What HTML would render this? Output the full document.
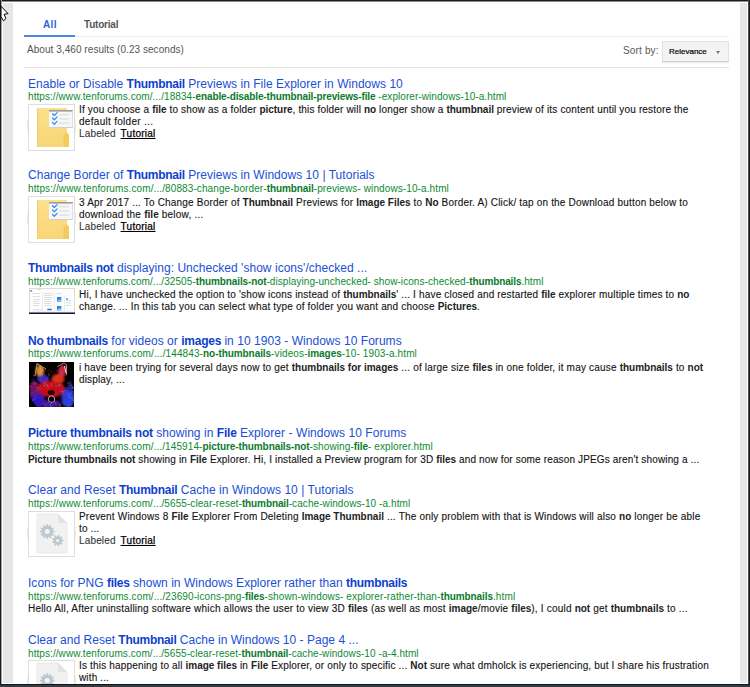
<!DOCTYPE html>
<html><head><meta charset="utf-8"><title>Search results</title><style>
*{margin:0;padding:0;box-sizing:border-box}
html,body{width:750px;height:687px;overflow:hidden;background:#fff}
body{position:relative;font-family:"Liberation Sans",sans-serif}
.frame{position:absolute;left:0;top:0;width:750px;height:687px;pointer-events:none}
.ti,.ur,.sn,.hd{position:absolute;white-space:nowrap;line-height:16px}
.ti{font-size:12px;color:#1a4fd6}
.ti b{color:#0d3fcf}
.ur{font-size:10px;color:#0c8a32}
.ur b{color:#0a7a2c}
.sn{font-size:10px;color:#141414;-webkit-text-stroke-width:0.12px}
.sn b{-webkit-text-stroke-width:0}
.sn b{color:#222}
.lab{color:#383838;letter-spacing:0.15px}
.tut{color:#000;text-decoration:underline;margin-left:2px;letter-spacing:0.25px;-webkit-text-stroke-width:0.25px}
.box{position:absolute;border:1px solid #dedede;background:#fff;overflow:hidden}
.box svg{position:absolute;left:0;top:0}
</style></head>
<body>

<div style="position:absolute;left:24px;top:35px;width:51px;height:2px;background:#4a86e8"></div>
<div style="position:absolute;left:75px;top:36px;width:654px;height:1px;background:#ebebeb"></div>
<div style="position:absolute;left:24px;top:67px;width:705px;height:1px;background:#e5e5e5"></div>
<div style="position:absolute;left:662px;top:41px;width:67px;height:21px;background:#f3f3f3;border:1px solid #e3e3e3;border-bottom-color:#d2d2d2;box-shadow:0 1px 1px rgba(0,0,0,0.08)"></div>
<div style="position:absolute;left:716px;top:51px;width:0;height:0;border-left:2.5px solid transparent;border-right:2.5px solid transparent;border-top:3px solid #777"></div>
<div id='hA' class='hd' style='left:43px;top:17px;font-size:10px;color:#2a66dc;letter-spacing:0.400px'><b>All</b></div><div id='hT' class='hd' style='left:84px;top:17px;font-size:10px;color:#555;letter-spacing:-0.214px'><b>Tutorial</b></div><div id='hR' class='hd' style='left:27px;top:42px;font-size:10px;color:#555;letter-spacing:0.055px'>About 3,460 results (0.23 seconds)</div><div id='hS' class='hd' style='left:623px;top:43px;font-size:10px;color:#5a5a5a;letter-spacing:0.157px'>Sort by:</div><div id='hV' class='hd' style='left:669px;top:44px;font-size:8px;color:#000;-webkit-text-stroke:0.2px #000'>Relevance</div>
<div id='t0' class='ti' style='left:28px;top:76px;letter-spacing:0.030px'>Enable or Disable <b style="letter-spacing:-0.270px">Thumbnail</b> Previews in File Explorer in Windows 10</div><div id='u0' class='ur' style='left:28px;top:89px;letter-spacing:0.069px'>https://www.tenforums.com/.../18834-<b style="letter-spacing:-0.121px">enable-disable-thumbnail-previews-file</b> -explorer-windows-10-a.html</div><div id='s0_0' class='sn' style='left:79px;top:102px;letter-spacing:0.161px'>If you choose a <b style="letter-spacing:-0.029px">file</b> to show as a folder <b style="letter-spacing:-0.029px">picture</b>, this folder will <b style="letter-spacing:-0.029px">no</b> longer show a <b style="letter-spacing:-0.029px">thumbnail</b> preview of its content until you restore the</div><div id='s0_1' class='sn' style='left:79px;top:114px;letter-spacing:0.294px'>default folder ...</div><div class='sn lab' style='left:79px;top:126px'>Labeled <span class='tut'>Tutorial</span></div><div id='t1' class='ti' style='left:28px;top:167px;letter-spacing:0.033px'>Change Border of <b style="letter-spacing:-0.267px">Thumbnail</b> Previews in Windows 10 | Tutorials</div><div id='u1' class='ur' style='left:28px;top:181px;letter-spacing:0.105px'>https://www.tenforums.com/.../80883-change-border-<b style="letter-spacing:-0.085px">thumbnail</b>-previews- windows-10-a.html</div><div id='s1_0' class='sn' style='left:79px;top:195px;letter-spacing:0.183px'>3 Apr 2017 ... To Change Border of <b style="letter-spacing:-0.007px">Thumbnail</b> Previews for <b style="letter-spacing:-0.007px">Image Files</b> to <b style="letter-spacing:-0.007px">No</b> Border. A) Click/ tap on the Download button below to</div><div id='s1_1' class='sn' style='left:79px;top:207px;letter-spacing:0.222px'>download the <b style="letter-spacing:0.032px">file</b> below, ...</div><div class='sn lab' style='left:79px;top:219px'>Labeled <span class='tut'>Tutorial</span></div><div id='t2' class='ti' style='left:28px;top:260px;letter-spacing:0.033px'><b style="letter-spacing:-0.267px">Thumbnails not</b> displaying: Unchecked &#39;show icons&#39;/checked ...</div><div id='u2' class='ur' style='left:28px;top:274px;letter-spacing:0.076px'>https://www.tenforums.com/.../32505-<b style="letter-spacing:-0.114px">thumbnails-not</b>-displaying-unchecked- show-icons-checked-<b style="letter-spacing:-0.114px">thumbnails</b>.html</div><div id='s2_0' class='sn' style='left:79px;top:287px;letter-spacing:0.170px'>Hi, I have unchecked the option to &#39;show icons instead of <b style="letter-spacing:-0.020px">thumbnails</b>&#39; ... I have closed and restarted <b style="letter-spacing:-0.020px">file</b> explorer multiple times to <b style="letter-spacing:-0.020px">no</b></div><div id='s2_1' class='sn' style='left:79px;top:299px;letter-spacing:0.184px'>change. ... In this tab you can select what type of folder you want and choose <b style="letter-spacing:-0.006px">Pictures</b>.</div><div id='t3' class='ti' style='left:28px;top:333px;letter-spacing:0.039px'><b style="letter-spacing:-0.261px">No thumbnails</b> for videos or <b style="letter-spacing:-0.261px">images</b> in 10 1903 - Windows 10 Forums</div><div id='u3' class='ur' style='left:28px;top:346px;letter-spacing:0.120px'>https://www.tenforums.com/.../144843-<b style="letter-spacing:-0.070px">no-thumbnails</b>-videos-<b style="letter-spacing:-0.070px">images</b>-10- 1903-a.html</div><div id='s3_0' class='sn' style='left:79px;top:360px;letter-spacing:0.186px'>i have been trying for several days now to get <b style="letter-spacing:-0.004px">thumbnails for images</b> ... of large size <b style="letter-spacing:-0.004px">files</b> in one folder, it may cause <b style="letter-spacing:-0.004px">thumbnails</b> to <b style="letter-spacing:-0.004px">not</b></div><div id='s3_1' class='sn' style='left:79px;top:372px;letter-spacing:0.140px'>display, ...</div><div id='t4' class='ti' style='left:28px;top:425px;letter-spacing:0.061px'><b style="letter-spacing:-0.239px">Picture thumbnails not</b> showing in <b style="letter-spacing:-0.239px">File</b> Explorer - Windows 10 Forums</div><div id='u4' class='ur' style='left:28px;top:439px;letter-spacing:0.105px'>https://www.tenforums.com/.../145914-<b style="letter-spacing:-0.085px">picture-thumbnails-not</b>-showing-<b style="letter-spacing:-0.085px">file</b>- explorer.html</div><div id='s4_0' class='sn' style='left:28px;top:452px;letter-spacing:0.145px'><b style="letter-spacing:-0.045px">Picture thumbnails not</b> showing in <b style="letter-spacing:-0.045px">File</b> Explorer. Hi, I installed a Preview program for 3D <b style="letter-spacing:-0.045px">files</b> and now for some reason JPEGs aren&#39;t showing a ...</div><div id='t5' class='ti' style='left:28px;top:482px;letter-spacing:0.054px'>Clear and Reset <b style="letter-spacing:-0.246px">Thumbnail</b> Cache in Windows 10 | Tutorials</div><div id='u5' class='ur' style='left:28px;top:496px;letter-spacing:0.081px'>https://www.tenforums.com/.../5655-clear-reset-<b style="letter-spacing:-0.110px">thumbnail</b>-cache-windows-10 -a.html</div><div id='s5_0' class='sn' style='left:79px;top:509px;letter-spacing:0.193px'>Prevent Windows 8 <b style="letter-spacing:0.003px">File</b> Explorer From Deleting <b style="letter-spacing:0.003px">Image Thumbnail</b> ... The only problem with that is Windows will also <b style="letter-spacing:0.003px">no</b> longer be able</div><div id='s5_1' class='sn' style='left:79px;top:521px;letter-spacing:0.140px'>to ...</div><div class='sn lab' style='left:79px;top:533px'>Labeled <span class='tut'>Tutorial</span></div><div id='t6' class='ti' style='left:28px;top:575px;letter-spacing:0.023px'>Icons for PNG <b style="letter-spacing:-0.277px">files</b> shown in Windows Explorer rather than <b style="letter-spacing:-0.277px">thumbnails</b></div><div id='u6' class='ur' style='left:28px;top:589px;letter-spacing:0.112px'>https://www.tenforums.com/.../23690-icons-png-<b style="letter-spacing:-0.078px">files</b>-shown-windows- explorer-rather-than-<b style="letter-spacing:-0.078px">thumbnails</b>.html</div><div id='s6_0' class='sn' style='left:28px;top:601px;letter-spacing:0.197px'>Hello All, After uninstalling software which allows the user to view 3D <b style="letter-spacing:0.007px">files</b> (as well as most <b style="letter-spacing:0.007px">image</b>/movie <b style="letter-spacing:0.007px">files</b>), I could <b style="letter-spacing:0.007px">not</b> get <b style="letter-spacing:0.007px">thumbnails</b> to ...</div><div id='t7' class='ti' style='left:28px;top:632px;letter-spacing:0.018px'>Clear and Reset <b style="letter-spacing:-0.282px">Thumbnail</b> Cache in Windows 10 - Page 4 ...</div><div id='u7' class='ur' style='left:28px;top:646px;letter-spacing:0.073px'>https://www.tenforums.com/.../5655-clear-reset-<b style="letter-spacing:-0.117px">thumbnail</b>-cache-windows-10 -a-4.html</div><div id='s7_0' class='sn' style='left:79px;top:658px;letter-spacing:0.170px'>Is this happening to all <b style="letter-spacing:-0.020px">image files</b> in <b style="letter-spacing:-0.020px">File</b> Explorer, or only to specific ... <b style="letter-spacing:-0.020px">Not</b> sure what dmholck is experiencing, but I share his frustration</div><div id='s7_1' class='sn' style='left:79px;top:670px;letter-spacing:0.140px'>with ...</div><div style='position:absolute;left:27px;top:120px;width:1px;height:12px;background:#ececec'></div><div style='position:absolute;left:75px;top:120px;width:1px;height:12px;background:#ececec'></div><div class='box' style='left:28px;top:104px;width:47px;height:47px'><svg width="45" height="45" viewBox="0 0 45 45"><defs><linearGradient id="fg" x1="0" y1="0" x2="0" y2="1"><stop offset="0" stop-color="#fbe08e"/><stop offset="1" stop-color="#f8d677"/></linearGradient></defs><rect x="8" y="3" width="30" height="39" fill="url(#fg)"/><rect x="8" y="3" width="1.2" height="39" fill="#f3cd67"/><path d="M35 29.5 L37.5 27 L40 29.5 L40 42 L35 42 Z" fill="#f4cb5e"/><path d="M35 29.5 L35 42" stroke="#efc455" stroke-width="0.8"/><rect x="20" y="5" width="24" height="18" fill="#f7f7f7"/><rect x="20" y="5" width="24" height="1.6" fill="#9c9c9c"/><rect x="20" y="22" width="24" height="1" fill="#cfcfcf"/><rect x="43" y="6" width="1" height="17" fill="#dedede"/><g fill="none" stroke="#3592e6" stroke-width="1.25" stroke-linecap="round" stroke-linejoin="round"><path d="M23.5 8.7 L25.3 10.5 L28.2 7.6"/><path d="M23.5 13 L25.3 14.8 L28.2 11.9"/><path d="M23.5 17.5 L25.3 19.3 L28.2 16.4"/></g><g fill="#e3e3e3"><rect x="30" y="8.8" width="10" height="1.6"/><rect x="30" y="13.2" width="10" height="1.6"/><rect x="30" y="17.4" width="10" height="1.6"/></g></svg>
</div><div style='position:absolute;left:27px;top:212px;width:1px;height:12px;background:#ececec'></div><div style='position:absolute;left:75px;top:212px;width:1px;height:12px;background:#ececec'></div><div class='box' style='left:28px;top:196px;width:47px;height:47px'><svg width="45" height="45" viewBox="0 0 45 45"><defs><linearGradient id="fg" x1="0" y1="0" x2="0" y2="1"><stop offset="0" stop-color="#fbe08e"/><stop offset="1" stop-color="#f8d677"/></linearGradient></defs><rect x="8" y="3" width="30" height="39" fill="url(#fg)"/><rect x="8" y="3" width="1.2" height="39" fill="#f3cd67"/><path d="M35 29.5 L37.5 27 L40 29.5 L40 42 L35 42 Z" fill="#f4cb5e"/><path d="M35 29.5 L35 42" stroke="#efc455" stroke-width="0.8"/><rect x="20" y="5" width="24" height="18" fill="#f7f7f7"/><rect x="20" y="5" width="24" height="1.6" fill="#9c9c9c"/><rect x="20" y="22" width="24" height="1" fill="#cfcfcf"/><rect x="43" y="6" width="1" height="17" fill="#dedede"/><g fill="none" stroke="#3592e6" stroke-width="1.25" stroke-linecap="round" stroke-linejoin="round"><path d="M23.5 8.7 L25.3 10.5 L28.2 7.6"/><path d="M23.5 13 L25.3 14.8 L28.2 11.9"/><path d="M23.5 17.5 L25.3 19.3 L28.2 16.4"/></g><g fill="#e3e3e3"><rect x="30" y="8.8" width="10" height="1.6"/><rect x="30" y="13.2" width="10" height="1.6"/><rect x="30" y="17.4" width="10" height="1.6"/></g></svg>
</div><div style='position:absolute;left:29px;top:288px;width:46px;height:26px'><svg width="46" height="26" viewBox="0 0 46 26"><rect x="0" y="0" width="46" height="26" fill="#fdfdfd"/><rect x="0.5" y="0.5" width="45" height="24.5" fill="none" stroke="#dcdcdc" stroke-width="1"/><rect x="1.2" y="2" width="2" height="1.6" fill="#4a9ae6"/><rect x="9" y="1" width="3" height="1" fill="#f2d870"/><g stroke="#e2e2e2" stroke-width="0.6"><path d="M13.5 4 V23 M25.5 5 V23 M35.5 7 V23"/><path d="M2 23.3 H44"/></g><g fill="#d2d2d2"><rect x="3" y="5" width="8" height="0.7"/><rect x="4" y="8" width="7" height="0.7"/><rect x="5" y="11" width="6" height="0.7"/><rect x="4" y="13" width="6" height="0.7"/><rect x="4" y="15" width="7" height="0.7"/><rect x="4" y="17" width="6" height="0.7"/><rect x="15" y="5" width="9" height="0.7"/><rect x="15" y="7" width="8" height="0.7"/><rect x="15" y="9" width="9" height="0.7"/><rect x="15" y="11" width="7" height="0.7"/><rect x="15" y="13" width="8" height="0.7"/><rect x="15" y="15" width="7" height="0.7"/><rect x="15" y="17" width="8" height="0.7"/><rect x="37" y="12" width="5" height="0.7"/><rect x="37" y="14.5" width="5" height="0.7"/><rect x="37" y="17" width="5" height="0.7"/><rect x="4" y="21.5" width="10" height="0.7"/><rect x="27" y="5" width="6" height="0.7"/></g><rect x="28" y="9" width="4.3" height="4.7" fill="#2a86e0"/><path d="M28.3 13.3 L30 11.3 L31 12.3 L32 11.5 L32 13.5 L28.3 13.5 Z" fill="#9ccaf5"/><rect x="28" y="18" width="4.3" height="4.3" fill="#2a86e0"/><path d="M28.3 22 L30 20 L31 21 L32 20.2 L32 22.2 L28.3 22.2 Z" fill="#9ccaf5"/><rect x="18.3" y="20.7" width="4.5" height="1.6" fill="#2a86e0"/><circle cx="38" cy="11" r="0.9" fill="#3c8ee0"/><rect x="0" y="24.5" width="46" height="1.5" fill="#15102e"/></svg>
</div><div style='position:absolute;left:29px;top:362px;width:45px;height:45px'><svg width="45" height="45" viewBox="0 0 45 45"><defs><filter id="wb" x="-30%" y="-30%" width="160%" height="160%"><feGaussianBlur stdDeviation="1.2"/></filter><filter id="ws" x="-10%" y="-10%" width="120%" height="120%"><feGaussianBlur stdDeviation="0.35"/></filter><clipPath id="wcp"><path d="M3 16 L6 2 L9 1 L17 8 L28 8 L35 0.5 L38 2 L40 15 L45 26 L45 45 L8 45 L1 36 L0 24 Z"/></clipPath></defs><rect width="45" height="45" fill="#000"/><g filter="url(#wb)" clip-path="url(#wcp)"><ellipse cx="11" cy="9" rx="4" ry="6" fill="#d88838" opacity="1"/><ellipse cx="33" cy="9" rx="4" ry="6" fill="#c82848" opacity="1"/><ellipse cx="14" cy="17" rx="6" ry="4" fill="#4028b8" opacity="0.95"/><ellipse cx="29" cy="17" rx="6.5" ry="5" fill="#d83018" opacity="1"/><ellipse cx="22" cy="27" rx="14" ry="8" fill="#c00e1c" opacity="1"/><ellipse cx="5" cy="28" rx="4.5" ry="9" fill="#7a1868" opacity="0.9"/><ellipse cx="9" cy="39" rx="7.5" ry="7" fill="#3418c0" opacity="0.95"/><ellipse cx="39" cy="36" rx="6.5" ry="9.5" fill="#3040e0" opacity="0.95"/><ellipse cx="22" cy="42" rx="10" ry="4" fill="#4a1cb0" opacity="0.9"/><ellipse cx="22" cy="8" rx="4" ry="3" fill="#140208" opacity="1"/><ellipse cx="42" cy="24" rx="3" ry="6" fill="#281c90" opacity="0.8"/></g><g filter="url(#ws)" clip-path="url(#wcp)" stroke-linecap="round"><path d="M14.9 9.2 L13.5 5.8" stroke="#f0a050" stroke-width="0.55" opacity="0.38"/><path d="M24.0 18.0 L24.4 15.9" stroke="#ff3030" stroke-width="0.55" opacity="0.37"/><path d="M19.6 5.9 L19.3 3.7" stroke="#f0a050" stroke-width="0.55" opacity="0.54"/><path d="M36.6 8.1 L38.1 6.0" stroke="#f04060" stroke-width="0.55" opacity="0.63"/><path d="M41.8 26.7 L44.7 26.6" stroke="#6a80ff" stroke-width="0.55" opacity="0.79"/><path d="M3.0 38.2 L0.6 39.6" stroke="#5040ff" stroke-width="0.55" opacity="0.41"/><path d="M6.1 15.6 L2.7 13.4" stroke="#6048e0" stroke-width="0.55" opacity="0.43"/><path d="M26.0 29.2 L28.5 30.8" stroke="#ff3030" stroke-width="0.55" opacity="0.38"/><path d="M3.6 11.4 L0.7 9.1" stroke="#f0a050" stroke-width="0.55" opacity="0.54"/><path d="M14.5 27.0 L11.4 27.0" stroke="#ff3030" stroke-width="0.55" opacity="0.71"/><path d="M31.1 13.0 L32.8 10.1" stroke="#f04060" stroke-width="0.55" opacity="0.59"/><path d="M38.6 32.9 L41.2 33.8" stroke="#6a80ff" stroke-width="0.55" opacity="0.79"/><path d="M6.1 20.1 L2.5 18.6" stroke="#6048e0" stroke-width="0.55" opacity="0.42"/><path d="M22.0 4.6 L21.9 0.9" stroke="#f04060" stroke-width="0.55" opacity="0.69"/><path d="M25.6 38.9 L26.4 41.6" stroke="#ff7040" stroke-width="0.55" opacity="0.62"/><path d="M25.9 21.7 L28.2 18.3" stroke="#ff7040" stroke-width="0.55" opacity="0.56"/><path d="M29.6 5.5 L30.7 1.9" stroke="#f04060" stroke-width="0.55" opacity="0.64"/><path d="M43.7 36.7 L46.2 37.8" stroke="#6a80ff" stroke-width="0.55" opacity="0.52"/><path d="M29.8 3.9 L30.7 0.9" stroke="#f04060" stroke-width="0.55" opacity="0.43"/><path d="M6.0 5.4 L3.7 2.3" stroke="#f0a050" stroke-width="0.55" opacity="0.41"/><path d="M11.6 19.0 L8.3 16.6" stroke="#6048e0" stroke-width="0.55" opacity="0.39"/><path d="M20.3 25.5 L16.8 23.2" stroke="#ff7040" stroke-width="0.55" opacity="0.74"/><path d="M13.0 20.0 L10.6 18.3" stroke="#6048e0" stroke-width="0.55" opacity="0.75"/><path d="M42.2 9.2 L44.0 7.6" stroke="#f04060" stroke-width="0.55" opacity="0.45"/><path d="M11.0 22.9 L7.8 21.7" stroke="#ff3030" stroke-width="0.55" opacity="0.35"/><path d="M19.0 18.1 L17.8 15.0" stroke="#6048e0" stroke-width="0.55" opacity="0.78"/><path d="M30.7 24.1 L34.0 23.0" stroke="#ff7040" stroke-width="0.55" opacity="0.37"/><path d="M39.7 35.0 L43.5 36.7" stroke="#6a80ff" stroke-width="0.55" opacity="0.71"/><path d="M17.9 19.4 L16.7 17.4" stroke="#6048e0" stroke-width="0.55" opacity="0.64"/><path d="M3.7 5.8 L2.0 3.9" stroke="#f0a050" stroke-width="0.55" opacity="0.42"/><path d="M15.6 5.2 L15.0 3.2" stroke="#f0a050" stroke-width="0.55" opacity="0.42"/><path d="M5.4 17.9 L3.5 16.9" stroke="#6048e0" stroke-width="0.55" opacity="0.74"/><path d="M27.4 9.1 L28.1 6.6" stroke="#f04060" stroke-width="0.55" opacity="0.51"/><path d="M16.7 8.0 L15.4 4.1" stroke="#f0a050" stroke-width="0.55" opacity="0.80"/><path d="M21.0 22.8 L20.3 20.7" stroke="#ff3030" stroke-width="0.55" opacity="0.50"/><path d="M12.4 37.0 L10.7 38.7" stroke="#5040ff" stroke-width="0.55" opacity="0.36"/><path d="M41.9 24.7 L44.2 24.4" stroke="#6a80ff" stroke-width="0.55" opacity="0.59"/><path d="M2.2 24.7 L-2.3 24.1" stroke="#ff7040" stroke-width="0.55" opacity="0.66"/><path d="M12.2 18.0 L10.4 16.4" stroke="#6048e0" stroke-width="0.55" opacity="0.70"/><path d="M23.9 34.9 L24.4 37.7" stroke="#ff3030" stroke-width="0.55" opacity="0.72"/><path d="M43.4 38.0 L46.9 39.8" stroke="#6a80ff" stroke-width="0.55" opacity="0.72"/><path d="M32.8 12.3 L34.7 9.6" stroke="#f04060" stroke-width="0.55" opacity="0.51"/><path d="M2.2 4.1 L0.5 2.1" stroke="#f0a050" stroke-width="0.55" opacity="0.47"/><path d="M30.8 42.2 L32.3 45.0" stroke="#ff7040" stroke-width="0.55" opacity="0.79"/><path d="M42.1 18.0 L44.4 16.9" stroke="#ff3030" stroke-width="0.55" opacity="0.44"/><path d="M9.8 28.6 L5.6 29.1" stroke="#5040ff" stroke-width="0.55" opacity="0.73"/><path d="M21.6 29.8 L20.4 33.6" stroke="#ff3030" stroke-width="0.55" opacity="0.65"/><path d="M40.1 35.1 L43.6 36.7" stroke="#6a80ff" stroke-width="0.55" opacity="0.57"/><path d="M8.7 35.4 L6.3 36.8" stroke="#5040ff" stroke-width="0.55" opacity="0.71"/><path d="M42.8 19.2 L45.6 18.2" stroke="#ff7040" stroke-width="0.55" opacity="0.68"/><path d="M8.3 8.2 L6.9 6.3" stroke="#f0a050" stroke-width="0.55" opacity="0.76"/><path d="M35.7 9.0 L38.1 5.7" stroke="#f04060" stroke-width="0.55" opacity="0.79"/><path d="M29.3 17.4 L31.2 14.6" stroke="#ff3030" stroke-width="0.55" opacity="0.36"/><path d="M42.7 29.6 L46.0 30.1" stroke="#6a80ff" stroke-width="0.55" opacity="0.77"/><path d="M19.7 38.7 L18.7 42.7" stroke="#ff3030" stroke-width="0.55" opacity="0.46"/><path d="M13.6 12.9 L11.8 9.9" stroke="#f0a050" stroke-width="0.55" opacity="0.47"/><path d="M19.0 8.4 L18.2 4.2" stroke="#f0a050" stroke-width="0.55" opacity="0.51"/><path d="M20.7 26.9 L16.4 26.7" stroke="#ff3030" stroke-width="0.55" opacity="0.76"/><path d="M22.6 24.8 L22.7 21.5" stroke="#ff3030" stroke-width="0.55" opacity="0.55"/><path d="M8.9 3.2 L6.9 -0.3" stroke="#f0a050" stroke-width="0.55" opacity="0.43"/><path d="M21.4 32.7 L20.7 36.1" stroke="#ff3030" stroke-width="0.55" opacity="0.58"/><path d="M24.9 35.2 L25.5 37.3" stroke="#ff3030" stroke-width="0.55" opacity="0.46"/><path d="M12.9 34.7 L10.4 36.7" stroke="#5040ff" stroke-width="0.55" opacity="0.60"/><path d="M33.7 40.4 L35.7 42.8" stroke="#6a80ff" stroke-width="0.55" opacity="0.63"/><path d="M22.7 24.0 L23.0 20.3" stroke="#ff3030" stroke-width="0.55" opacity="0.59"/><path d="M21.6 41.6 L21.3 45.3" stroke="#ff7040" stroke-width="0.55" opacity="0.77"/><path d="M12.2 25.9 L7.8 25.5" stroke="#ff7040" stroke-width="0.55" opacity="0.41"/><path d="M6.2 21.1 L4.2 20.4" stroke="#6048e0" stroke-width="0.55" opacity="0.46"/><path d="M4.1 30.4 L0.3 31.2" stroke="#5040ff" stroke-width="0.55" opacity="0.75"/><path d="M7.6 32.4 L4.2 33.6" stroke="#5040ff" stroke-width="0.55" opacity="0.41"/><path d="M39.0 42.7 L40.8 44.4" stroke="#6a80ff" stroke-width="0.55" opacity="0.78"/><path d="M18.1 23.0 L14.8 19.9" stroke="#ff7040" stroke-width="0.55" opacity="0.42"/><path d="M19.6 24.1 L17.5 22.2" stroke="#ff3030" stroke-width="0.55" opacity="0.49"/><path d="M32.1 3.8 L33.3 0.7" stroke="#f04060" stroke-width="0.55" opacity="0.55"/><path d="M1.8 16.6 L-1.4 15.0" stroke="#6048e0" stroke-width="0.55" opacity="0.58"/><path d="M3.8 43.4 L0.8 46.0" stroke="#5040ff" stroke-width="0.55" opacity="0.79"/><path d="M5.5 13.9 L3.8 12.6" stroke="#f0a050" stroke-width="0.55" opacity="0.70"/><path d="M12.6 8.3 L11.2 5.6" stroke="#f0a050" stroke-width="0.55" opacity="0.76"/><path d="M36.2 13.6 L37.9 11.9" stroke="#f04060" stroke-width="0.55" opacity="0.76"/><path d="M25.5 31.7 L26.7 33.6" stroke="#ff3030" stroke-width="0.55" opacity="0.66"/><path d="M19.3 6.0 L18.6 1.7" stroke="#f0a050" stroke-width="0.55" opacity="0.64"/><path d="M35.5 6.4 L37.7 2.9" stroke="#f04060" stroke-width="0.55" opacity="0.38"/><path d="M38.1 21.6 L40.8 20.7" stroke="#ff3030" stroke-width="0.55" opacity="0.77"/><path d="M12.5 8.3 L11.0 5.4" stroke="#f0a050" stroke-width="0.55" opacity="0.46"/><path d="M5.7 9.6 L4.2 8.1" stroke="#f0a050" stroke-width="0.55" opacity="0.44"/><path d="M14.4 15.5 L12.2 12.3" stroke="#6048e0" stroke-width="0.55" opacity="0.48"/><path d="M22.5 10.3 L22.5 7.4" stroke="#f04060" stroke-width="0.55" opacity="0.36"/><path d="M11.8 3.6 L10.2 0.1" stroke="#f0a050" stroke-width="0.55" opacity="0.60"/><path d="M9.1 22.5 L5.0 21.1" stroke="#ff3030" stroke-width="0.55" opacity="0.72"/><path d="M19.6 23.3 L17.1 20.1" stroke="#ff3030" stroke-width="0.55" opacity="0.58"/><path d="M30.6 43.3 L31.8 45.8" stroke="#ff7040" stroke-width="0.55" opacity="0.67"/><path d="M28.3 19.6 L30.1 17.3" stroke="#ff3030" stroke-width="0.55" opacity="0.41"/><path d="M4.0 33.4 L1.5 34.2" stroke="#5040ff" stroke-width="0.55" opacity="0.42"/><path d="M4.6 37.5 L1.0 39.6" stroke="#5040ff" stroke-width="0.55" opacity="0.65"/><path d="M13.1 12.9 L11.6 10.7" stroke="#f0a050" stroke-width="0.55" opacity="0.56"/><path d="M7.8 21.3 L5.3 20.3" stroke="#6048e0" stroke-width="0.55" opacity="0.78"/><path d="M42.8 25.4 L45.4 25.2" stroke="#6a80ff" stroke-width="0.55" opacity="0.78"/><path d="M14.3 17.6 L13.0 16.1" stroke="#6048e0" stroke-width="0.55" opacity="0.52"/><path d="M21.4 23.6 L20.6 21.2" stroke="#ff3030" stroke-width="0.55" opacity="0.35"/><path d="M12.4 6.7 L11.0 4.0" stroke="#f0a050" stroke-width="0.55" opacity="0.37"/><path d="M2.0 15.5 L-0.3 14.2" stroke="#6048e0" stroke-width="0.55" opacity="0.61"/><path d="M23.8 33.8 L24.4 37.4" stroke="#ff7040" stroke-width="0.55" opacity="0.75"/><path d="M17.7 16.4 L15.9 12.3" stroke="#6048e0" stroke-width="0.55" opacity="0.42"/><path d="M32.1 29.4 L34.2 29.9" stroke="#ff7040" stroke-width="0.55" opacity="0.75"/><path d="M28.0 33.1 L30.7 36.1" stroke="#ff3030" stroke-width="0.55" opacity="0.59"/><path d="M22.7 37.2 L22.8 41.2" stroke="#ff7040" stroke-width="0.55" opacity="0.61"/><path d="M39.4 31.0 L43.0 31.9" stroke="#6a80ff" stroke-width="0.55" opacity="0.45"/><path d="M2.3 8.5 L0.2 6.5" stroke="#f0a050" stroke-width="0.55" opacity="0.40"/><path d="M36.9 25.9 L40.5 25.6" stroke="#6a80ff" stroke-width="0.55" opacity="0.63"/><path d="M30.3 23.1 L32.1 22.2" stroke="#ff7040" stroke-width="0.55" opacity="0.69"/><path d="M22.6 24.9 L22.9 21.3" stroke="#ff3030" stroke-width="0.55" opacity="0.68"/><path d="M11.8 6.1 L10.6 3.7" stroke="#f0a050" stroke-width="0.55" opacity="0.68"/><path d="M9.8 33.3 L5.9 35.3" stroke="#5040ff" stroke-width="0.55" opacity="0.57"/><path d="M17.5 22.6 L14.6 20.2" stroke="#ff7040" stroke-width="0.55" opacity="0.63"/><path d="M28.6 6.2 L29.3 3.9" stroke="#f04060" stroke-width="0.55" opacity="0.46"/><path d="M33.0 15.5 L35.3 12.9" stroke="#ff3030" stroke-width="0.55" opacity="0.38"/><path d="M12.6 30.6 L9.0 31.8" stroke="#5040ff" stroke-width="0.55" opacity="0.65"/><path d="M13.5 24.2 L10.5 23.2" stroke="#ff3030" stroke-width="0.55" opacity="0.40"/><path d="M39.4 11.2 L42.7 8.1" stroke="#f04060" stroke-width="0.55" opacity="0.77"/><path d="M1.8 21.8 L-2.2 20.8" stroke="#6048e0" stroke-width="0.55" opacity="0.79"/><path d="M20.3 14.0 L19.9 11.5" stroke="#f0a050" stroke-width="0.55" opacity="0.78"/><path d="M10.1 26.8 L7.7 26.8" stroke="#ff3030" stroke-width="0.55" opacity="0.78"/><path d="M6.7 36.6 L3.9 38.3" stroke="#5040ff" stroke-width="0.55" opacity="0.75"/><path d="M31.2 12.5 L33.4 8.9" stroke="#f04060" stroke-width="0.55" opacity="0.57"/><path d="M2.1 3.1 L-0.0 0.7" stroke="#f0a050" stroke-width="0.55" opacity="0.55"/><path d="M14.0 8.8 L12.8 6.2" stroke="#f0a050" stroke-width="0.55" opacity="0.49"/><path d="M37.1 3.1 L39.2 -0.2" stroke="#f04060" stroke-width="0.55" opacity="0.73"/><path d="M6.2 41.0 L3.3 43.4" stroke="#5040ff" stroke-width="0.55" opacity="0.76"/><path d="M13.5 18.3 L11.3 16.2" stroke="#6048e0" stroke-width="0.55" opacity="0.80"/><path d="M26.3 17.8 L27.5 15.0" stroke="#ff3030" stroke-width="0.55" opacity="0.37"/><path d="M5.4 37.2 L3.0 38.6" stroke="#5040ff" stroke-width="0.55" opacity="0.77"/><path d="M11.7 13.9 L9.6 11.4" stroke="#f0a050" stroke-width="0.55" opacity="0.44"/><path d="M17.1 42.2 L15.6 46.2" stroke="#ff7040" stroke-width="0.55" opacity="0.63"/><path d="M40.3 41.6 L42.9 43.7" stroke="#6a80ff" stroke-width="0.55" opacity="0.67"/><path d="M3.1 33.0 L0.1 34.0" stroke="#5040ff" stroke-width="0.55" opacity="0.69"/><path d="M28.7 14.7 L29.7 12.8" stroke="#f04060" stroke-width="0.55" opacity="0.77"/><path d="M6.5 22.4 L3.7 21.6" stroke="#ff3030" stroke-width="0.55" opacity="0.68"/><path d="M43.0 13.7 L46.0 11.7" stroke="#f04060" stroke-width="0.55" opacity="0.49"/><path d="M25.0 19.2 L25.7 16.9" stroke="#ff3030" stroke-width="0.55" opacity="0.44"/><path d="M40.0 23.4 L42.5 22.9" stroke="#6a80ff" stroke-width="0.55" opacity="0.76"/></g><g filter="url(#ws)"><path d="M6 14 L8 1.5 L17 7" fill="none" stroke="#e8b070" stroke-width="0.8"/><path d="M28 5 L35 0.8 L37.5 3 L37.5 13" fill="none" stroke="#f09098" stroke-width="0.8"/><path d="M35.5 4 L37 11" stroke="#ffd0e0" stroke-width="1"/><ellipse cx="22.3" cy="30.5" rx="3.5" ry="2.6" fill="#180004" opacity="0.9"/><path d="M14.6 23.2 Q17 21.8 19.4 24 Q17 25 14.6 23.2 Z" fill="#e89890"/><path d="M30.9 23.2 Q28.5 21.8 26.1 24 Q28.5 25 30.9 23.2 Z" fill="#e89890"/><ellipse cx="17.2" cy="23.5" rx="1.1" ry="0.6" fill="#300810"/><ellipse cx="28.3" cy="23.5" rx="1.1" ry="0.6" fill="#300810"/><circle cx="22.5" cy="37" r="3.2" fill="none" stroke="#d8c0d8" stroke-width="0.75"/><circle cx="22.5" cy="37.3" r="2.5" fill="#000"/></g></svg></div><div style='position:absolute;left:27px;top:527px;width:1px;height:12px;background:#ececec'></div><div style='position:absolute;left:75px;top:527px;width:1px;height:12px;background:#ececec'></div><div class='box' style='left:28px;top:511px;width:47px;height:46px'><svg width="45" height="44" viewBox="0 0 45 44"><path d="M8 2 L29 2 L38 11 L38 41 L8 41 Z" fill="#f1f1f1" stroke="#e6e6e6" stroke-width="0.8"/><path d="M29 2 L29 11 L38 11 Z" fill="#e3e3e3"/><path d="M23.72 18.64 L25.46 18.80 L25.46 20.40 L23.72 20.56 L23.46 21.52 L24.88 22.53 L24.08 23.92 L22.50 23.19 L21.79 23.90 L22.52 25.48 L21.13 26.28 L20.12 24.86 L19.16 25.12 L19.00 26.86 L17.40 26.86 L17.24 25.12 L16.28 24.86 L15.27 26.28 L13.88 25.48 L14.61 23.90 L13.90 23.19 L12.32 23.92 L11.52 22.53 L12.94 21.52 L12.68 20.56 L10.94 20.40 L10.94 18.80 L12.68 18.64 L12.94 17.68 L11.52 16.67 L12.32 15.28 L13.90 16.01 L14.61 15.30 L13.88 13.72 L15.27 12.92 L16.28 14.34 L17.24 14.08 L17.40 12.34 L19.00 12.34 L19.16 14.08 L20.12 14.34 L21.13 12.92 L22.52 13.72 L21.79 15.30 L22.50 16.01 L24.08 15.28 L24.88 16.67 L23.46 17.68 Z" fill="#bcc7cf"/><path d="M32.69 27.56 L34.24 27.68 L34.24 29.32 L32.69 29.44 L32.36 30.35 L33.47 31.43 L32.42 32.69 L31.16 31.78 L30.32 32.27 L30.47 33.81 L28.86 34.10 L28.47 32.59 L27.51 32.43 L26.64 33.71 L25.22 32.89 L25.89 31.49 L25.27 30.75 L23.77 31.16 L23.21 29.63 L24.63 28.99 L24.63 28.01 L23.21 27.37 L23.77 25.84 L25.27 26.25 L25.89 25.51 L25.22 24.11 L26.64 23.29 L27.51 24.57 L28.47 24.41 L28.86 22.90 L30.47 23.19 L30.32 24.73 L31.16 25.22 L32.42 24.31 L33.47 25.57 L32.36 26.65 Z" fill="#bcc7cf"/><circle cx="18.2" cy="19.6" r="2.5" fill="#f3f3f3"/><circle cx="28.7" cy="28.5" r="1.6" fill="#f3f3f3"/></svg></div><div style='position:absolute;left:27px;top:676px;width:1px;height:12px;background:#ececec'></div><div style='position:absolute;left:75px;top:676px;width:1px;height:12px;background:#ececec'></div><div class='box' style='left:28px;top:660px;width:47px;height:46px'><svg width="45" height="44" viewBox="0 0 45 44"><path d="M8 2 L29 2 L38 11 L38 41 L8 41 Z" fill="#f1f1f1" stroke="#e6e6e6" stroke-width="0.8"/><path d="M29 2 L29 11 L38 11 Z" fill="#e3e3e3"/><path d="M23.72 18.64 L25.46 18.80 L25.46 20.40 L23.72 20.56 L23.46 21.52 L24.88 22.53 L24.08 23.92 L22.50 23.19 L21.79 23.90 L22.52 25.48 L21.13 26.28 L20.12 24.86 L19.16 25.12 L19.00 26.86 L17.40 26.86 L17.24 25.12 L16.28 24.86 L15.27 26.28 L13.88 25.48 L14.61 23.90 L13.90 23.19 L12.32 23.92 L11.52 22.53 L12.94 21.52 L12.68 20.56 L10.94 20.40 L10.94 18.80 L12.68 18.64 L12.94 17.68 L11.52 16.67 L12.32 15.28 L13.90 16.01 L14.61 15.30 L13.88 13.72 L15.27 12.92 L16.28 14.34 L17.24 14.08 L17.40 12.34 L19.00 12.34 L19.16 14.08 L20.12 14.34 L21.13 12.92 L22.52 13.72 L21.79 15.30 L22.50 16.01 L24.08 15.28 L24.88 16.67 L23.46 17.68 Z" fill="#bcc7cf"/><path d="M32.69 27.56 L34.24 27.68 L34.24 29.32 L32.69 29.44 L32.36 30.35 L33.47 31.43 L32.42 32.69 L31.16 31.78 L30.32 32.27 L30.47 33.81 L28.86 34.10 L28.47 32.59 L27.51 32.43 L26.64 33.71 L25.22 32.89 L25.89 31.49 L25.27 30.75 L23.77 31.16 L23.21 29.63 L24.63 28.99 L24.63 28.01 L23.21 27.37 L23.77 25.84 L25.27 26.25 L25.89 25.51 L25.22 24.11 L26.64 23.29 L27.51 24.57 L28.47 24.41 L28.86 22.90 L30.47 23.19 L30.32 24.73 L31.16 25.22 L32.42 24.31 L33.47 25.57 L32.36 26.65 Z" fill="#bcc7cf"/><circle cx="18.2" cy="19.6" r="2.5" fill="#f3f3f3"/><circle cx="28.7" cy="28.5" r="1.6" fill="#f3f3f3"/></svg></div>

<div style="position:absolute;left:3px;top:3px;width:10px;height:680px;background:#e6e6e6"></div>
<div style="position:absolute;left:740px;top:3px;width:7px;height:680px;background:#e6e6e6"></div>
<div style="position:absolute;left:0;top:0;width:750px;height:1px;background:#1c1c1c"></div>
<div style="position:absolute;left:0;top:1px;width:750px;height:1px;background:#8a8a8a"></div>
<div style="position:absolute;left:0;top:0;width:1px;height:687px;background:#1c1c1c"></div>
<div style="position:absolute;left:1px;top:0;width:1px;height:687px;background:#a0a0a0"></div>
<div style="position:absolute;left:748px;top:0;width:1px;height:687px;background:#4a4a4a"></div>
<div style="position:absolute;left:749px;top:0;width:1px;height:687px;background:#1e1e1e"></div>
<div style="position:absolute;left:0;top:684px;width:750px;height:1px;background:#031a30"></div>
<svg style="position:absolute;left:0;top:0" width="12" height="24" viewBox="0 0 12 24"><path d="M1 6.2 L1 16.5 L3.4 20.8 L5.9 18.6 L4.1 14.3 L8 13.6 Z" fill="#fff" stroke="#000" stroke-width="1" stroke-linejoin="miter"/></svg>
<div style="position:absolute;left:0;top:685px;width:750px;height:2px;background:#3a3a3a"></div>

</body></html>
